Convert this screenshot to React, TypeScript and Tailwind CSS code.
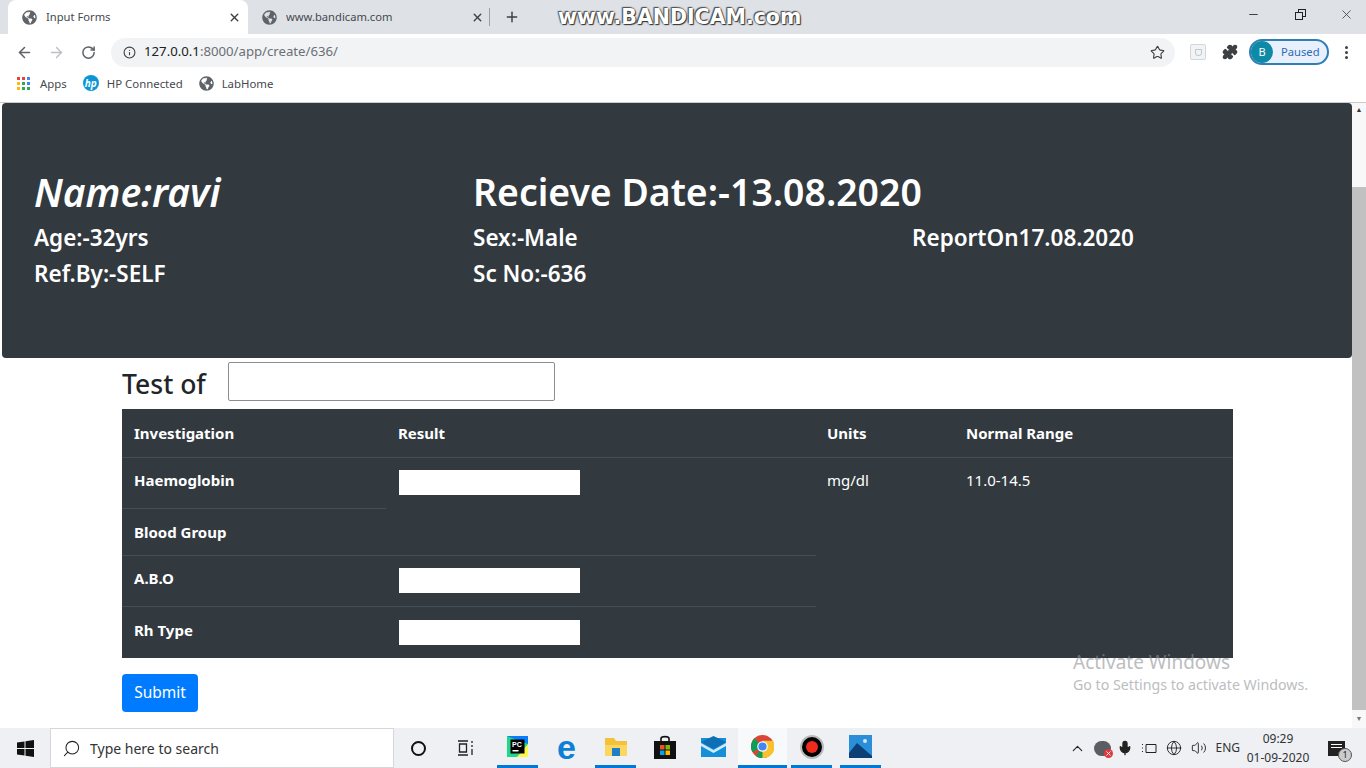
import { ReactNode } from "react";
import { ArrowLeft, ArrowRight, RotateCw, Info, Star, Puzzle, X, Plus, Minus, Search, ChevronUp, Mic, Volume2, Globe } from "lucide-react";
import { FaGlobeAmericas } from "react-icons/fa";

const ui = "font-['Noto_Sans','Open_Sans',sans-serif]";

function Tab({ title, active }: { title: string; active?: boolean }) {
  return (
    <div className={`flex h-[34px] items-center pl-[14px] ${active ? "w-[240px] rounded-t-lg bg-white pr-[7px]" : "w-[241px] pr-[5px]"}`}>
      <FaGlobeAmericas className="text-[#5f6368]" size={15} />
      <span className="ml-[9px] flex-1 text-[11.2px] text-[#45494e]">{title}</span>
      <X size={13} strokeWidth={2.6} className="text-[#3c4043]" />
    </div>
  );
}

function TaskIcon({ children, open, light }: { children: ReactNode; open?: boolean; light?: boolean }) {
  return (
    <div className={`flex h-[40px] w-[49px] shrink-0 flex-col items-center ${light ? "bg-[#f8f9fa]" : ""}`}>
      <div className="flex flex-1 items-center justify-center">{children}</div>
      <div className={`h-[3px] ${light ? "w-full" : "w-[41px]"} ${open ? "bg-[#0078d7]" : ""}`} />
    </div>
  );
}

function Bookmark({ icon, label }: { icon: ReactNode; label: string }) {
  return (
    <div className="flex items-center gap-[8px]">
      {icon}
      <span className="text-[11.4px] text-[#45494e]">{label}</span>
    </div>
  );
}

function Field() {
  return <input className="block h-[25px] w-[181px] bg-white" />;
}

export default function App() {
  const th = "h-[48px] pl-[12px] text-left align-middle text-[15px] font-bold text-white";
  const td = "pl-[12px] align-top text-[15px] font-bold text-white";
  const line = "border-t border-[#454d55]";
  return (
    <div className={`relative flex h-screen w-full flex-col overflow-hidden bg-white ${ui}`}>
      {/* tab strip */}
      <div className="flex h-[34px] shrink-0 items-center bg-[#dee1e6] pl-[8px]">
        <Tab title="Input Forms" active />
        <Tab title="www.bandicam.com" />
        <div className="h-[18px] w-px bg-[#9aa0a6]" />
        <Plus size={16} strokeWidth={2.2} className="ml-[14px] text-[#3c4043]" />
        <span className="ml-[38px] font-['DejaVu_Sans',sans-serif] text-[20.5px] font-bold text-white [text-shadow:0_0_2px_#333,1px_1px_1px_#333,-1px_-1px_1px_#555]">
          www.BANDICAM.com
        </span>
        <div className="mb-[6px] ml-auto flex items-center text-[#3c4043]">
          <Minus size={13} className="mr-[35px]" />
          <div className="relative mr-[33px] h-[11px] w-[11px]">
            <div className="absolute right-0 top-0 h-[8px] w-[8px] border border-[#222]" />
            <div className="absolute bottom-0 left-0 h-[8px] w-[8px] border border-[#222] bg-[#dee1e6]" />
          </div>
          <X size={15} strokeWidth={1.3} className="mr-[12px]" />
        </div>
      </div>

      {/* toolbar */}
      <div className="flex h-[34px] shrink-0 items-center bg-white pl-[16px] pt-[2px]">
        <ArrowLeft size={17} strokeWidth={2.2} className="text-[#5f6368]" />
        <ArrowRight size={17} strokeWidth={2} className="ml-[15px] text-[#bcbfc3]" />
        <RotateCw size={15} strokeWidth={2.4} className="ml-[16px] text-[#5f6368]" />
        <div className="ml-[15px] flex h-[29px] w-[1064px] items-center rounded-full bg-[#f1f3f4] pl-[12px] pr-[10px]">
          <Info size={13} className="text-[#3c4043]" />
          <span className="ml-[8px] flex-1 text-[13.2px] text-[#202124]">
            127.0.0.1<span className="text-[#6b6f74]">:8000/app/create/636/</span>
          </span>
          <Star size={15} strokeWidth={1.8} className="text-[#3c4043]" />
        </div>
        <div className="ml-[15px] flex h-[16px] w-[16px] items-center justify-center rounded-[2px] border border-[#d4d7da] bg-[#f1f3f4]">
          <div className="h-[7px] w-[7px] rounded-b-[3px] border border-[#c2c5c9]" />
        </div>
        <Puzzle size={16} fill="#3c4043" className="ml-[16px] text-[#3c4043]" />
        <div className="ml-[11px] flex h-[26px] w-[80px] items-center rounded-full border-2 border-[#2f7fb5] bg-[#e8f0fe]">
          <div className="flex h-[22px] w-[22px] items-center justify-center rounded-full bg-[#0e8aa6] text-[11px] text-white">B</div>
          <span className="ml-[8px] text-[11.2px] text-[#2b6cb0]">Paused</span>
        </div>
        <div className="ml-[16px] flex flex-col gap-[2px]">
          <div className="h-[3px] w-[3px] rounded-full bg-[#3c4043]" />
          <div className="h-[3px] w-[3px] rounded-full bg-[#3c4043]" />
          <div className="h-[3px] w-[3px] rounded-full bg-[#3c4043]" />
        </div>
      </div>

      {/* bookmarks */}
      <div className="flex h-[35px] shrink-0 items-center gap-[16px] border-b border-[#c9cbce] bg-white pb-[3px] pl-[17px]">
        <Bookmark
          label="Apps"
          icon={
            <div className="mr-[2px] grid grid-cols-3 gap-[2px]">
              <div className="h-[3px] w-[3px] bg-[#ea4335]" />
              <div className="h-[3px] w-[3px] bg-[#ea4335]" />
              <div className="h-[3px] w-[3px] bg-[#4285f4]" />
              <div className="h-[3px] w-[3px] bg-[#fbbc05]" />
              <div className="h-[3px] w-[3px] bg-[#34a853]" />
              <div className="h-[3px] w-[3px] bg-[#4285f4]" />
              <div className="h-[3px] w-[3px] bg-[#fbbc05]" />
              <div className="h-[3px] w-[3px] bg-[#34a853]" />
              <div className="h-[3px] w-[3px] bg-[#34a853]" />
            </div>
          }
        />
        <Bookmark
          label="HP Connected"
          icon={
            <div className="flex h-[16px] w-[16px] items-center justify-center rounded-full bg-[#0a96d6] text-[10px] font-bold italic text-white">
              hp
            </div>
          }
        />
        <Bookmark label="LabHome" icon={<FaGlobeAmericas className="text-[#5f6368]" size={15} />} />
      </div>

      {/* page */}
      <div className="flex min-h-0 flex-1">
        <div className="min-w-0 flex-1 pl-[2px]">
          <div className="flex h-[255px] flex-col justify-center rounded-[4px] bg-[#32393f] pl-[32px] text-white">
            <div className="grid grid-cols-[439px_439px_1fr] text-[22.5px] font-semibold leading-[36px]">
              <div className="mb-[6px] text-[39px] font-semibold italic leading-[44px]">Name:ravi</div>
              <div className="col-span-2 mb-[6px] text-[37.4px] font-semibold leading-[44px]">Recieve Date:-13.08.2020</div>
              <div>Age:-32yrs</div>
              <div>Sex:-Male</div>
              <div>ReportOn17.08.2020</div>
              <div>Ref.By:-SELF</div>
              <div>Sc No:-636</div>
            </div>
          </div>

          <div className="px-[120px]">
            <div className="mt-[4px] flex items-center">
              <label className="w-[106px] pt-[5px] text-[26.5px] font-medium leading-[34px] text-[#212529]">Test of</label>
              <input className="h-[39px] w-[327px] rounded-[2px] border border-[#8a8d91] bg-white" />
            </div>

            <table className="mt-[8px] w-[1111px] table-fixed border-collapse bg-[#32393f]">
              <colgroup>
                <col className="w-[264px]" />
                <col className="w-[430px]" />
                <col className="w-[139px]" />
                <col />
              </colgroup>
              <thead>
                <tr>
                  <th className={th}>Investigation</th>
                  <th className={th}>Result</th>
                  <th className={`${th} !pl-[11px]`}>Units</th>
                  <th className={`${th} !pl-[11px]`}>Normal Range</th>
                </tr>
              </thead>
              <tbody>
                <tr className={`h-[51px] ${line}`}>
                  <td className={`${td} pt-[11px]`}>Haemoglobin</td>
                  <td rowSpan={2} className="pl-[13px] pt-[12px] align-top"><Field /></td>
                  <td rowSpan={4} className="pl-[11px] pt-[11px] align-top text-[15px] text-white">mg/dl</td>
                  <td rowSpan={4} className="pl-[11px] pt-[11px] align-top text-[15px] text-white">11.0-14.5</td>
                </tr>
                <tr className="h-[47px]">
                  <td className={`${td} ${line} pt-[12px]`}>Blood Group</td>
                </tr>
                <tr className="h-[51px]">
                  <td className={`${td} ${line} pt-[11px]`}>A.B.O</td>
                  <td className={`${line} pl-[13px] pt-[12px] align-top`}><Field /></td>
                </tr>
                <tr className="h-[52px]">
                  <td className={`${td} ${line} pt-[12px]`}>Rh Type</td>
                  <td className={`${line} pl-[13px] pt-[13px] align-top`}><Field /></td>
                </tr>
              </tbody>
            </table>

            <button className="mt-[16px] h-[38px] w-[76px] rounded-[4px] bg-[#007bff] text-[15.5px] text-white">Submit</button>
          </div>
        </div>

        {/* scrollbar */}
        <div className="flex w-[14px] shrink-0 flex-col items-center bg-[#f8f8f8]">
          <div className="h-[84px] w-full text-center text-[7px] leading-[14px] text-[#333]">▲</div>
          <div className="h-[523px] w-full bg-[#c1c1c1]" />
          <div className="w-full text-center text-[7px] leading-[18px] text-[#777]">▼</div>
        </div>
      </div>

      {/* taskbar */}
      <div className="flex h-[40px] shrink-0 items-center bg-[#eef0f3]">
        <div className="flex w-[50px] shrink-0 justify-center">
          <svg width="17" height="17" viewBox="0 0 17 17" fill="#111">
            <path d="M0 2.5 7.5 1.4V8H0ZM8.5 1.3 17 0V8H8.5ZM0 9H7.5V15.6L0 14.5ZM8.5 9H17V17L8.5 15.7Z" />
          </svg>
        </div>
        <div className="flex h-[40px] w-[344px] shrink-0 items-center border border-[#d4d6d9] bg-white pl-[11px]">
          <Search size={19} strokeWidth={1.3} className="-scale-x-100 text-[#222]" />
          <span className="ml-[9px] text-[14px] text-[#333]">Type here to search</span>
        </div>
        <div className="flex w-[48px] shrink-0 justify-center">
          <div className="h-[15px] w-[15px] rounded-full border-2 border-[#111]" />
        </div>
        <div className="mr-[3px] flex w-[48px] shrink-0 justify-center">
          <svg width="18" height="16" viewBox="0 0 18 16" fill="none" stroke="#222" strokeWidth="1.3">
            <path d="M1 1h10M1 15h10M2.5 4h7v8h-7zM15 1v2M15 5v2M15 9v6" />
          </svg>
        </div>
        <TaskIcon open>
          <svg width="21" height="21" viewBox="0 0 21 21">
            <rect width="21" height="21" fill="#21d789" />
            <path d="M0 0H21V8Z" fill="#087cfa" />
            <path d="M21 8V21H10Z" fill="#fcf84a" />
            <rect x="3.5" y="3.5" width="14" height="14" fill="#000" />
            <rect x="5.5" y="14" width="6" height="1.5" fill="#fff" />
            <text x="5" y="11" fontSize="7" fontWeight="700" fill="#fff" fontFamily="Liberation Sans">PC</text>
          </svg>
        </TaskIcon>
        <TaskIcon>
          <span className="font-['Liberation_Sans',sans-serif] text-[34px] font-bold leading-[28px] text-[#0f7fd6]">e</span>
        </TaskIcon>
        <TaskIcon open>
          <svg width="22" height="19" viewBox="0 0 22 19">
            <path d="M0 1h9l2 3h11v4H0Z" fill="#f3c13a" />
            <rect y="8" width="22" height="11" fill="#fbd660" />
            <rect x="7" y="11" width="8" height="8" fill="#1f7fc4" />
          </svg>
        </TaskIcon>
        <TaskIcon>
          <svg width="22" height="24" viewBox="0 0 22 24">
            <path d="M7 7V3.5C7 1 15 1 15 3.5V7" fill="none" stroke="#111" strokeWidth="1.6" />
            <rect y="6" width="22" height="18" fill="#111" />
            <rect x="6" y="10" width="4.5" height="4.5" fill="#f25022" />
            <rect x="11.5" y="10" width="4.5" height="4.5" fill="#7fba00" />
            <rect x="6" y="15.5" width="4.5" height="4.5" fill="#00a4ef" />
            <rect x="11.5" y="15.5" width="4.5" height="4.5" fill="#ffb900" />
          </svg>
        </TaskIcon>
        <TaskIcon>
          <svg width="25" height="21" viewBox="0 0 25 21">
            <rect y="2" width="25" height="19" fill="#1590d8" />
            <path d="M0 6 12.5 0 25 6 12.5 13Z" fill="#0e6fb5" />
            <path d="M0 7 12.5 14 25 7V10L12.5 17 0 10Z" fill="#cfeafb" />
          </svg>
        </TaskIcon>
        <TaskIcon open light>
          <svg width="23" height="23" viewBox="0 0 24 24">
            <circle cx="12" cy="12" r="12" fill="#db4437" />
            <path d="M12 12 22.4 18A12 12 0 0 1 5 21.8Z" fill="#0f9d58" />
            <path d="M12 12 1.6 18A12 12 0 0 1 3.5 3.5Z" fill="#0f9d58" />
            <path d="M12 6H23A12 12 0 0 1 12 24Z" fill="#fbc02d" />
            <circle cx="12" cy="12" r="5.5" fill="#fff" />
            <circle cx="12" cy="12" r="4.3" fill="#4285f4" />
          </svg>
        </TaskIcon>
        <TaskIcon open>
          <div className="flex h-[24px] w-[24px] items-center justify-center rounded-full border-2 border-[#bbb] bg-black">
            <div className="h-[12px] w-[12px] rounded-full bg-[#f02a1d]" />
          </div>
        </TaskIcon>
        <TaskIcon open>
          <svg width="23" height="23" viewBox="0 0 23 23">
            <rect width="23" height="23" fill="#2a8fd8" />
            <circle cx="16" cy="6" r="2" fill="#cfe8fa" />
            <path d="M0 18 8 8 23 21V23H0Z" fill="#0c3f75" />
          </svg>
        </TaskIcon>

        <div className="ml-auto flex items-center text-[#222]">
          <ChevronUp size={17} strokeWidth={1.6} />
          <div className="relative ml-[8px] h-[15px] w-[17px] rounded-full bg-[#5a5d61]">
            <div className="absolute -bottom-[2px] -right-[2px] flex h-[9px] w-[9px] items-center justify-center rounded-full bg-[#e0393e]">
              <X size={7} strokeWidth={3} className="text-white" />
            </div>
          </div>
          <Mic size={16} fill="#222" className="ml-[6px]" />
          <svg width="16" height="13" viewBox="0 0 16 13" fill="none" stroke="#222" className="ml-[8px]">
            <path d="M1 2.5h1M1 6h1M1 9.5h1M5 2.5h10v8H5z" />
          </svg>
          <Globe size={16} strokeWidth={1.4} className="ml-[9px]" />
          <Volume2 size={16} strokeWidth={1.4} className="ml-[9px]" />
          <span className="ml-[8px] text-[12px] text-[#333]">ENG</span>
          <div className="ml-[6px] flex w-[64px] flex-col items-center text-[12px] leading-[19px] text-[#333]">
            <span>09:29</span>
            <span>01-09-2020</span>
          </div>
          <div className="relative ml-[18px] mr-[21px] flex h-[15px] w-[17px] flex-col gap-[2px] bg-[#222] px-[3px] pt-[3px]">
            <div className="h-px bg-white" />
            <div className="h-px bg-white" />
            <div className="absolute -bottom-[6px] -right-[7px] flex h-[14px] w-[14px] items-center justify-center rounded-full border border-[#555] bg-[#ccc] text-[9px] leading-none">1</div>
          </div>
        </div>
      </div>

      {/* activation watermark */}
      <div className="pointer-events-none absolute left-[1073px] top-[650px] text-[#8f9296] opacity-60">
        <div className="text-[19px] leading-[25px]">Activate Windows</div>
        <div className="text-[14.2px] leading-[20px]">Go to Settings to activate Windows.</div>
      </div>
    </div>
  );
}
